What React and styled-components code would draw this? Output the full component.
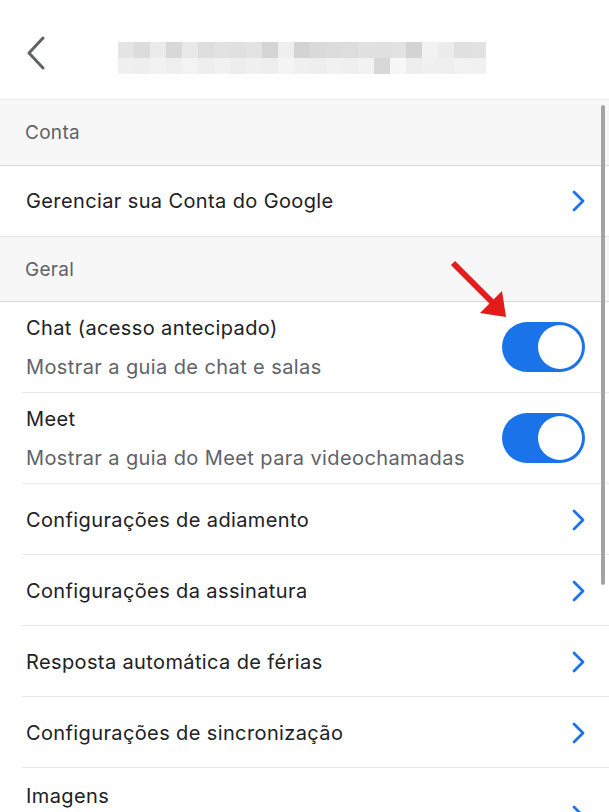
import React from 'react';
import styled, { createGlobalStyle } from 'styled-components';

const GlobalStyle = createGlobalStyle`
  html, body {
    margin: 0;
    padding: 0;
    background: #fff;
  }
  body {
    font-family: Inter, "Noto Sans", "Liberation Sans", sans-serif;
    -webkit-font-smoothing: antialiased;
  }
`;

// blurred account name, two rows of grey cells
const BLUR_TOP = [
  '#e4e4e4', '#dcdcdc', '#ebebeb', '#d8d8d8', '#e8e8e8', '#dedede', '#e2e2e2', '#e0e0e0',
  '#e3e3e3', '#d5d5d5', '#efefef', '#d3d3d3', '#dadada', '#dcdcdc', '#dddddd', '#e1e1e1',
  '#e0e0e0', '#e2e2e2', '#d3d3d3', '#f2f2f2', '#ececec', '#e0e0e0', '#e2e2e2',
];
const BLUR_BOTTOM = [
  '#f0f0f0', '#eeeeee', '#f2f2f2', '#efefef', '#f3f3f3', '#eeeeee', '#f1f1f1', '#ededed',
  '#f0f0f0', '#eeeeee', '#f4f4f4', '#f0f0f0', '#eeeeee', '#f1f1f1', '#efefef', '#f2f2f2',
  '#d8d8d8', '#f7f7f7', '#eeeeee', '#f0f0f0', '#efefef', '#f2f2f2', '#f1f1f1',
];

const Screen = styled.div`
  position: relative;
  width: 609px;
  height: 812px;
  overflow: hidden;
  background: #fff;
`;

const Header = styled.header`
  height: 100px;
  box-sizing: border-box;
  display: flex;
  align-items: flex-start;
  padding: 36px 0 0 25px;
  border-bottom: 1px solid #ececec;
`;

const BackButton = styled.div`
  width: 20px;
  height: 34px;
  display: flex;
`;

const Blur = styled.div`
  margin: 6px 0 0 73px;
  display: grid;
  grid-template-columns: repeat(23, 16px);
  grid-auto-rows: 16px;
`;

const Cell = styled.div`
  background: ${(p) => p.$shade};
`;

const Section = styled.div`
  height: ${(p) => p.$h}px;
  display: flex;
  align-items: center;
  padding-left: 25px;
  background: #f7f7f7;
  border-bottom: 1px solid #dadada;
  border-top: ${(p) => (p.$top ? '1px solid #e6e6e6' : 'none')};
  font-size: 19px;
  letter-spacing: 0.3px;
  color: #606368;
`;

const Row = styled.div`
  height: ${(p) => p.$h}px;
  display: flex;
  align-items: ${(p) => p.$align || 'center'};
  padding: 0 24px 0 26px;
  position: relative;
  &::after {
    content: '';
    display: ${(p) => (p.$last ? 'none' : 'block')};
    position: absolute;
    left: 22px;
    right: 0;
    bottom: 0;
    height: 1px;
    background: #e8e8e8;
  }
`;

const TextCol = styled.div`
  flex: 1;
  display: flex;
  flex-direction: column;
  gap: 15px;
  padding-top: ${(p) => p.$pt || 0}px;
`;

const Title = styled.div`
  font-size: 20px;
  letter-spacing: 0.38px;
  color: #202124;
  line-height: 24px;
`;

const Subtitle = styled.div`
  font-size: 20px;
  letter-spacing: 0.4px;
  color: #606368;
  line-height: 24px;
`;

const Toggle = styled.div`
  width: 83px;
  height: 50px;
  margin-top: -2px;
  border-radius: 25px;
  background: #1a73e8;
  display: flex;
  align-items: center;
  justify-content: flex-end;
  padding: 0 3px;
  box-sizing: border-box;
`;

const Knob = styled.div`
  width: 44px;
  height: 44px;
  border-radius: 50%;
  background: #fff;
`;

const ChevronWrap = styled.div`
  width: 13px;
  height: 22px;
  display: flex;
  margin-top: ${(p) => p.$mt || 0}px;
`;

const Scrollbar = styled.div`
  position: absolute;
  left: 601px;
  top: 105px;
  width: 4px;
  height: 480px;
  border-radius: 2px;
  background: #a3a3a3;
`;

const Arrow = styled.svg`
  position: absolute;
  left: 448px;
  top: 258px;
`;

const Chevron = ({ mt }) => (
  <ChevronWrap $mt={mt}>
    <svg width="13" height="22" viewBox="0 0 13 22">
      <path d="M2 2 L11 11 L2 20" fill="none" stroke="#1a73e8" strokeWidth="2.8" strokeLinecap="round" strokeLinejoin="round" />
    </svg>
  </ChevronWrap>
);

const NavRow = ({ label, last, h = 71 }) => (
  <Row $h={h} $last={last}>
    <TextCol>
      <Title>{label}</Title>
    </TextCol>
    <Chevron />
  </Row>
);

const ToggleRow = ({ title, sub, last }) => (
  <Row $h={91} $last={last}>
    <TextCol>
      <Title>{title}</Title>
      <Subtitle>{sub}</Subtitle>
    </TextCol>
    <Toggle>
      <Knob />
    </Toggle>
  </Row>
);

const App = () => (
  <Screen>
    <GlobalStyle />
    <Header>
      <BackButton>
        <svg width="20" height="34" viewBox="0 0 20 34">
          <path d="M18 2 L4 17 L18 32" fill="none" stroke="#5f6368" strokeWidth="3" strokeLinecap="round" strokeLinejoin="round" />
        </svg>
      </BackButton>
      <Blur>
        {BLUR_TOP.map((c, i) => <Cell key={'t' + i} $shade={c} />)}
        {BLUR_BOTTOM.map((c, i) => <Cell key={'b' + i} $shade={c} />)}
      </Blur>
    </Header>

    <Section $h={65}>Conta</Section>
    <NavRow label="Gerenciar sua Conta do Google" h={70} last />

    <Section $h={64} $top>Geral</Section>
    <ToggleRow title="Chat (acesso antecipado)" sub="Mostrar a guia de chat e salas" />
    <ToggleRow title="Meet" sub="Mostrar a guia do Meet para videochamadas" />
    <NavRow label="Configurações de adiamento" />
    <NavRow label="Configurações da assinatura" />
    <NavRow label="Resposta automática de férias" />
    <NavRow label="Configurações de sincronização" />
    <Row $h={90} $align="flex-start" $last>
      <TextCol $pt={16}>
        <Title>Imagens</Title>
      </TextCol>
      <Chevron mt={37} />
    </Row>

    <Scrollbar />
    <Arrow width="64" height="64" viewBox="0 0 64 64">
      <line x1="5" y1="5" x2="44" y2="44" stroke="#e51a1a" strokeWidth="6" />
      <polygon points="58,59 32,55 54,33" fill="#e51a1a" />
    </Arrow>
  </Screen>
);

export default App;
